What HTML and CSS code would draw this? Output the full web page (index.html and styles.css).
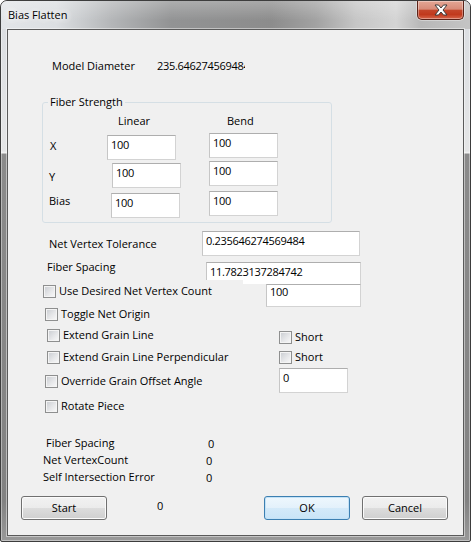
FILE: index.html
```html
<!DOCTYPE html>
<html lang="en">
<head>
<meta charset="utf-8">
<title>Bias Flatten</title>
<link rel="stylesheet" href="styles.css">
</head>
<body>
<div class="window">
  <div class="titlebar">
    <span class="title">Bias Flatten</span>
    <div class="close">
      <svg width="14" height="12" viewBox="0 0 14 12" aria-hidden="true"><path d="M1 1h3.5L7 4l2.5-3H13L9 6l4 5H9.5L7 8l-2.5 3H1l4-5z" fill="#fff" stroke="#3b3b3b" stroke-width="1" stroke-linejoin="round"/></svg>
    </div>
  </div>
  <div class="client">
    <div class="row-model">
      <span class="lbl-model">Model Diameter</span>
      <span class="value-clip num">235.646274569484</span>
    </div>

    <fieldset class="group">
      <legend>Fiber Strength</legend>
      <div class="frow head"><span></span><span class="h-linear">Linear</span><span class="h-bend">Bend</span></div>
      <div class="frow rx"><span class="flbl">X</span><span class="tb tb-sm tb-l num">100</span><span class="tb tb-sm num">100</span></div>
      <div class="frow ry"><span class="flbl">Y</span><span class="tb tb-sm tb-l num">100</span><span class="tb tb-sm num">100</span></div>
      <div class="frow rb"><span class="flbl">Bias</span><span class="tb tb-sm tb-l num">100</span><span class="tb tb-sm num">100</span></div>
    </fieldset>

    <div class="row-nvt">
      <span class="lbl-nvt">Net Vertex Tolerance</span>
      <span class="tb tb-nvt num">0.235646274569484</span>
    </div>
    <div class="row-fs">
      <span class="lbl-fs">Fiber Spacing</span>
      <span class="tb tb-fs num">11.7823137284742</span>
    </div>
    <div class="row-ud">
      <div class="ud-cover"><label class="chk"><span class="cb"></span><span>Use Desired Net Vertex Count</span></label></div>
      <span class="tb tb-ud num">100</span>
    </div>
    <div class="row-tno">
      <label class="chk chk-a"><span class="cb"></span><span>Toggle Net Origin</span></label>
    </div>
    <div class="row-egl">
      <label class="chk chk-b"><span class="cb"></span><span>Extend Grain Line</span></label>
      <label class="chk chk-short"><span class="cb"></span><span>Short</span></label>
    </div>
    <div class="row-eglp">
      <label class="chk chk-b"><span class="cb"></span><span>Extend Grain Line Perpendicular</span></label>
      <label class="chk"><span class="cb"></span><span>Short</span></label>
    </div>
    <div class="row-ogo">
      <label class="chk chk-c"><span class="cb"></span><span>Override Grain Offset Angle</span></label>
      <span class="tb tb-sm num">0</span>
    </div>
    <div class="row-rp">
      <label class="chk chk-a"><span class="cb"></span><span>Rotate Piece</span></label>
    </div>

    <div class="st st1"><span class="st-lbl">Fiber Spacing</span><span class="st-val num">0</span></div>
    <div class="st st2"><span class="st-lbl">Net VertexCount</span><span class="st-val num">0</span></div>
    <div class="st st3"><span class="st-lbl">Self Intersection Error</span><span class="st-val num">0</span></div>

    <div class="btn-row">
      <div class="btn btn-start">Start</div>
      <span class="btn-count num">0</span>
      <div class="btn btn-default btn-ok">OK</div>
      <div class="btn btn-cancel">Cancel</div>
    </div>
  </div>
</div>
</body>
</html>
```

FILE: styles.css
```css
* { box-sizing: border-box; }
html, body { margin: 0; padding: 0; background: #ffffff; }
body {
  width: 471px;
  height: 542px;
  overflow: hidden;
  font-family: "Open Sans", "Liberation Sans", sans-serif;
  font-size: 11px;
  line-height: 14px;
  color: #000;
}

.window {
  width: 471px;
  height: 542px;
  border: 1px solid #3d3d3d;
  border-radius: 7px 7px 2px 2px;
  background: linear-gradient(to bottom, #dadde1 0px, #e4e5e6 150px, #f4f4f4 152px, #8b8b8b 153px, #828282 500px, #9a9a9a 541px);
  box-shadow: inset 0 0 0 1px rgba(255,255,255,0.4);
  display: flex;
  flex-direction: column;
  overflow: hidden;
}

.titlebar {
  height: 28px;
  flex: none;
  display: flex;
  justify-content: space-between;
  align-items: flex-start;
  border-radius: 6px 6px 0 0;
  background:
    linear-gradient(to bottom, rgba(255,255,255,0.25), rgba(255,255,255,0) 70%),
    linear-gradient(to right, #e2e5e8 0px, #dcdfe2 55px, #b4b6b8 110px, #929394 170px, #8c8c8c 270px, #a2a2a2 315px, #c6c6c6 355px, #d4d4d4 395px, #b8b8b8 420px, #c4c4c4 469px);
}

.title {
  margin: 7px 0 0 7px;
  text-shadow: 0 0 6px #fff, 0 0 10px #fff, 0 0 14px #fff;
}

.close {
  width: 47px;
  height: 19px;
  margin-right: 6px;
  border: 1px solid #5b2218;
  border-top: none;
  border-radius: 0 0 5px 5px;
  background: linear-gradient(to bottom, #e4a695 0%, #d88b78 45%, #c4452a 52%, #c1391d 75%, #d6654a 100%);
  box-shadow: inset 0 0 0 1px rgba(255,255,255,0.35), 0 0 0 1px rgba(255,255,255,0.35);
  display: flex;
  align-items: center;
  justify-content: center;
}

.client {
  flex: 1;
  margin: 0 6px 5px 6px;
  border: 1px solid #5a5a5a;
  background: #f0f0f0;
  box-shadow: 0 0 0 1px rgba(255,255,255,0.45);
}

.num { letter-spacing: -0.3px; }

/* Model diameter */
.row-model { display: flex; margin: 29px 0 0 44px; height: 14px; }
.lbl-model { width: 105px; flex: none; }
.value-clip { width: 88px; overflow: hidden; white-space: nowrap; }

/* Fiber strength group */
.group {
  margin: 22px 0 0 34px;
  width: 290px;
  min-width: 0;
  padding: 0 0 4px 0;
  border: 1px solid #d5dfe5;
  border-radius: 3px;
}
.group legend { margin-left: 5px; padding: 0 2px; line-height: 14px; }

.frow {
  display: grid;
  grid-template-columns: 63px 103px 1fr;
  align-items: start;
}
.frow.head { margin-top: 5px; height: 14px; }
.h-linear { margin-left: 12px; }
.h-bend { margin-left: 18px; }

.rx { margin-top: 5px; height: 28px; }
.rx .flbl { margin: 6px 0 0 7px; }
.rx .tb-l { margin: 2px 0 0 1px; }
.ry { height: 30px; }
.ry .flbl { margin: 9px 0 0 6px; }
.ry .tb-l { margin: 2px 0 0 6px; }
.rb { height: 27px; }
.rb .flbl { margin: 3px 0 0 6px; }
.rb .tb-l { margin: 2px 0 0 5px; }

/* Text boxes */
.tb {
  display: block;
  height: 25px;
  border: 1px solid #d3d3d3;
  border-top-color: #aeaeae;
  border-left-color: #c6c6c6;
  background: #fff;
  padding: 2px 0 0 3px;
  white-space: nowrap;
  overflow: hidden;
  flex: none;
}
.tb-sm { width: 69px; }

.row-nvt { display: flex; margin-top: 8px; height: 25px; }
.lbl-nvt { width: 153px; margin: 6px 0 0 41px; flex: none; }
.tb-nvt { width: 158px; }

.row-fs { display: flex; margin-top: 4px; height: 24px; }
.lbl-fs { width: 159px; margin-left: 39px; flex: none; }
.tb-fs { width: 155px; height: 22px; margin-top: 2px; border-bottom: none; }

.row-ud { display: flex; margin-top: -4px; height: 27px; align-items: flex-start; }
.ud-cover { width: 200px; height: 20px; margin-left: 35px; padding-top: 4px; background: #f0f0f0; flex: none; }
.tb-ud { width: 95px; height: 23px; margin: 4px 0 0 23px; padding-top: 0; }

/* Checkboxes */
.chk { display: flex; align-items: flex-start; gap: 3px; white-space: nowrap; }
.cb {
  width: 13px;
  height: 13px;
  margin-top: 1px;
  flex: none;
  border: 1px solid #8e8f8f;
  background: linear-gradient(135deg, #c8cbd0 0%, #e6e7e9 55%, #fafafa 100%);
  box-shadow: inset 0 0 0 1px #f4f4f4;
}

.row-tno { display: flex; height: 14px; }
.chk-a { margin-left: 37px; }
.row-egl { display: flex; margin-top: 7px; height: 16px; align-items: flex-start; }
.chk-b { margin-left: 39px; width: 232px; flex: none; }
.chk-short { margin-top: 2px; }
.row-eglp { display: flex; margin-top: 6px; height: 14px; align-items: flex-start; }
.row-ogo { display: flex; margin-top: 4px; height: 25px; align-items: flex-start; }
.chk-c { margin: 6px 0 0 37px; width: 234px; flex: none; }
.row-rp { display: flex; margin-top: 6px; height: 14px; }

/* Stats */
.st { display: flex; height: 17px; align-items: flex-start; }
.st1 { margin-top: 23px; }
.st1 .st-lbl { margin-left: 38px; width: 162px; }
.st2 .st-lbl, .st3 .st-lbl { margin-left: 35px; width: 163px; }
.st-lbl { flex: none; }
.st-val { margin-top: 1px; }

/* Buttons */
.btn-row { display: flex; margin-top: 9px; height: 24px; align-items: flex-start; }
.btn {
  width: 86px;
  height: 24px;
  flex: none;
  border: 1px solid #707070;
  border-radius: 3px;
  background: linear-gradient(to bottom, #f2f2f2 0%, #ebebeb 50%, #dddddd 50%, #cfcfcf 100%);
  box-shadow: inset 0 0 0 1px #fbfbfb;
  display: flex;
  align-items: center;
  justify-content: center;
  padding-bottom: 1px;
}
.btn-start { margin-left: 13px; }
.btn-count { margin: 3px 0 0 50px; }
.btn-ok { margin-left: auto; }
.btn-default {
  border-color: #3c7fb1;
  background: linear-gradient(to bottom, #eef7fd 0%, #e3f1fb 50%, #d4eaf9 50%, #c9e4f7 100%);
  box-shadow: inset 0 0 0 1px #c3e2f7;
}
.btn-cancel { margin: 0 15px 0 12px; }
```
